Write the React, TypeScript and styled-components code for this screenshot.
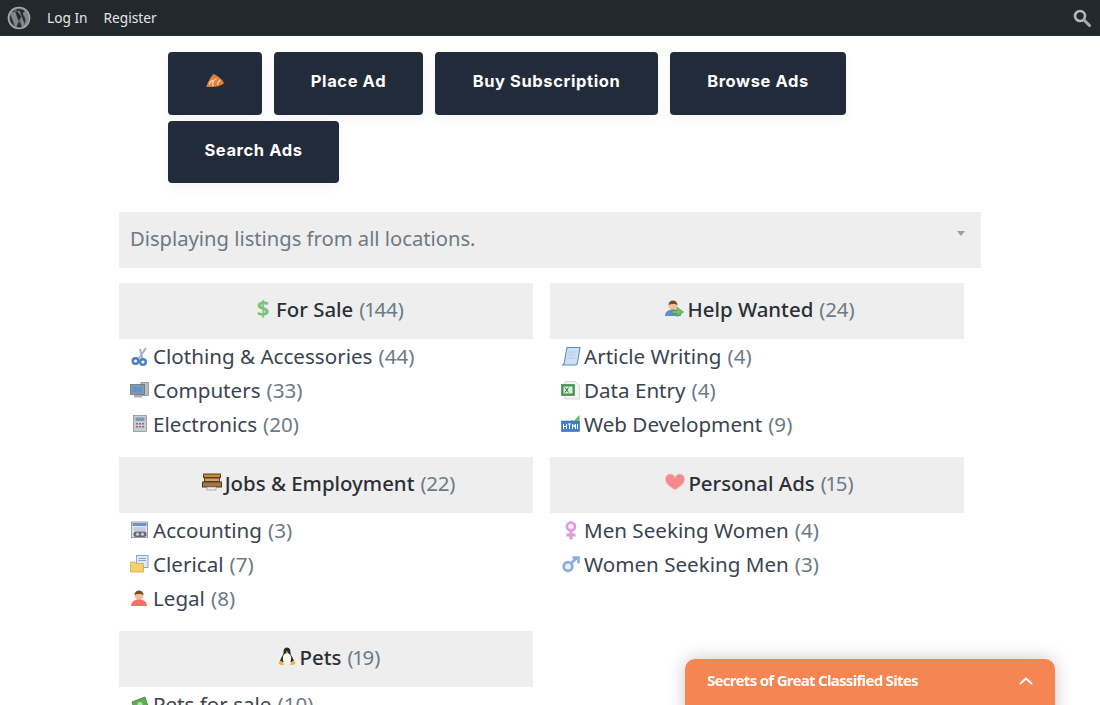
import React from "react";
import styled, { createGlobalStyle } from "styled-components";

const Global = createGlobalStyle`
  html, body { margin: 0; padding: 0; height: 705px; overflow: hidden; background: #fff; }
  body { font-family: "Noto Sans", "Open Sans", sans-serif; }
  * { box-sizing: border-box; }
`;

const AdminBar = styled.header`
  height: 36px;
  background: #23282d;
  display: flex;
  align-items: center;
  justify-content: space-between;
  padding: 0 9px 0 7px;
  border-bottom: 1px solid #2c3135;
`;
const AdminLeft = styled.nav`
  display: flex;
  align-items: center;
  gap: 16px;
`;
const AdminLink = styled.a`
  font-size: 13.7px;
  color: #e4e6e8;
`;
const Main = styled.main`
  padding: 16px 119px 0;
`;
const ButtonRows = styled.div`
  display: flex;
  flex-wrap: wrap;
  column-gap: 12px;
  row-gap: 6px;
  padding-left: 49px;
  width: 760px;
`;
const NavButton = styled.a<{ $w: number; $h: number; $lift: number }>`
  width: ${(p) => p.$w}px;
  height: ${(p) => p.$h}px;
  background: #222b39;
  border-radius: 4px;
  box-shadow: 0 4px 12px rgba(0, 0, 0, 0.05);
  color: #fff;
  font-family: Inter, "Liberation Sans", sans-serif;
  font-weight: 700;
  font-size: 16.5px;
  letter-spacing: 0.6px;
  display: flex;
  align-items: center;
  justify-content: center;
  padding-bottom: ${(p) => p.$lift}px;
`;
const LocationBar = styled.div`
  margin-top: 29px;
  width: 862px;
  height: 56px;
  background: #eee;
  display: flex;
  align-items: center;
  justify-content: space-between;
  padding: 0 16px 4px 11px;
  color: #6c7a85;
  font-size: 20.2px;
`;
const Caret = styled.span`
  width: 0;
  height: 0;
  border-left: 4.5px solid transparent;
  border-right: 4.5px solid transparent;
  border-top: 5px solid #97a0a8;
  margin-bottom: 10px;
`;
const Grid = styled.div`
  margin-top: 15px;
  display: grid;
  grid-template-columns: 414px 414px;
  column-gap: 17px;
  align-items: start;
`;
const Column = styled.div`
  display: flex;
  flex-direction: column;
`;
const Block = styled.section`
  margin-bottom: 16px;
`;
const Heading = styled.h2`
  margin: 0;
  height: 56px;
  background: #eee;
  display: flex;
  align-items: center;
  justify-content: center;
  gap: 3px;
  font-size: 20.4px;
  font-weight: 500;
  color: #2b2f36;
  padding: 0 0 5px 5px;
`;
const Count = styled.span`
  color: #6c7a85;
  font-weight: 400;
  margin-left: 3px;
  font-variant-numeric: proportional-nums;
`;
const List = styled.ul`
  list-style: none;
  margin: 0;
  padding: 0 0 0 11px;
`;
const Row = styled.li`
  height: 34px;
  display: flex;
  align-items: center;
  gap: 3px;
  font-size: 20.6px;
  color: #3a4450;
`;
const RowCount = styled.span`
  color: #6c7a85;
  margin-left: 3px;
`;
const IconBox = styled.svg`
  width: 20px;
  height: 20px;
  flex: none;
  margin-top: 1px;
`;
const Sticky = styled.aside`
  position: fixed;
  left: 685px;
  top: 659px;
  width: 370px;
  height: 60px;
  background: #f58653;
  border-radius: 10px 10px 0 0;
  box-shadow: 0 0 18px rgba(0, 0, 0, 0.22);
  display: flex;
  justify-content: space-between;
  padding: 10px 22px 0;
  color: #fff;
`;
const StickyTitle = styled.span`
  font-size: 15px;
  font-weight: 700;
  letter-spacing: -0.7px;
  line-height: 22px;
`;

const I = ({ children }: { children: React.ReactNode }) => <IconBox viewBox="0 0 20 20">{children}</IconBox>;

const Dollar = () => (
  <IconBox viewBox="0 0 20 20">
    <text x="10" y="17" textAnchor="middle" fontSize="22" fontWeight="700" fill="#7cc27a" fontFamily="Noto Sans">$</text>
  </IconBox>
);
const Person = ({ c, arrow }: { c: string; arrow?: boolean }) => (
  <I>
    <circle cx="9" cy="6.500" r="4.500" fill="#f0bf9c" />
    <path d="M4.500 6a4.500 4.500 0 0 1 9 0c-2-1.500-7-1.500-9 0z" fill="#7a4a2a" />
    <path d="M1 17c0-4 3-6.500 8-6.500s8 2.500 8 6.500z" fill={c} />
    {arrow && <path d="M8 11.500h5V8.500l6.500 4.500-6.500 4.500v-3H8z" fill="#76c066" stroke="#4c8f3f" strokeWidth=".7" />}
  </I>
);
const Scissors = () => (
  <I>
    <path d="M16 1 8.500 12M10 2l2.500 10" stroke="#a6b4c4" strokeWidth="2" fill="none" />
    <circle cx="5.500" cy="14" r="2.800" fill="none" stroke="#4a7fc0" strokeWidth="2.400" />
    <circle cx="13" cy="15" r="2.800" fill="none" stroke="#4a7fc0" strokeWidth="2.400" />
  </I>
);
const Computer = () => (
  <I>
    <rect x="11" y="1.500" width="7.500" height="13" fill="#b9bec4" stroke="#7c848c" strokeWidth=".7" />
    <rect x="0.500" y="3.500" width="14" height="10" fill="#8d99a6" stroke="#5e6973" strokeWidth=".7" />
    <rect x="2.500" y="5.500" width="10" height="6" fill="#5d95d3" />
    <rect x="4" y="14" width="8" height="2.500" fill="#a9afb5" />
  </I>
);
const Calc = () => (
  <I>
    <rect x="3.500" y="0.500" width="13" height="16" fill="#c7ccd2" stroke="#80868d" strokeWidth=".7" />
    <rect x="5.500" y="2.500" width="9" height="3.500" fill="#7f99bd" />
    <path d="M6 8h2v1.500H6zm3 0h2v1.500H9zm3 0h2v1.500h-2zM6 11h2v1.500H6zm3 0h2v1.500H9zm3 0h2v1.500h-2z" fill="#8a6f72" />
  </I>
);
const Scroll = () => (
  <I>
    <path d="M6 .5h13l-2.500 15c-.3 2-1 2.500-2 2.500H1c1.500 0 2-1 2.300-2.500z" fill="#cfe0f5" stroke="#5f8cc6" strokeWidth="1.100" />
    <path d="M7 5h8M6.500 8h8M6 11h8" stroke="#a8c4e4" strokeWidth=".8" />
  </I>
);
const Sheet = () => (
  <I>
    <path d="M4 .5h10l4.500 4.500v13H4z" fill="#f4f4f4" stroke="#cfcfcf" strokeWidth=".8" />
    <rect x="0.500" y="3.500" width="13" height="11" fill="#3f9a4f" stroke="#2a7038" strokeWidth=".5" />
    <path d="M2.500 5.500h9v7h-9z" fill="#d8efd9" />
    <path d="m4 6.500 3.500 5m0-5-3.500 5" stroke="#2a7038" strokeWidth="1" />
  </I>
);
const Html = () => (
  <I>
    <rect x="0.500" y="6" width="18" height="10.500" fill="#3f7fd0" stroke="#2a5f9e" strokeWidth=".5" />
    <path d="M2.500 9v5m3-5v5m-3-2.500h3M7 9h3M8.500 9v5M11.500 14V9l1.500 3 1.500-3v5M16.500 9v5" stroke="#fff" strokeWidth="1" fill="none" />
    <path d="m10 5 3 1 5.500-6v5.500l-3 .5h-5.500z" fill="#5dbb4f" />
  </I>
);
const Printer = () => (
  <I>
    <rect x="1.500" y="1" width="17" height="3.500" fill="#c68a3e" stroke="#5e3f1a" strokeWidth="1" />
    <rect x="2.500" y="5" width="15" height="3.500" fill="#d0a060" stroke="#5e3f1a" strokeWidth="1" />
    <rect x="0.500" y="9" width="19" height="5" fill="#a07a44" stroke="#4e371a" strokeWidth="1" />
    <rect x="5" y="14" width="9" height="3" fill="#eee" stroke="#888" strokeWidth=".6" />
  </I>
);
const Ledger = () => (
  <I>
    <rect x="1.500" y="1" width="16" height="15.500" fill="#dfe6ee" stroke="#7f8c99" strokeWidth=".8" />
    <rect x="2.500" y="2" width="14" height="3" fill="#6c93c4" />
    <path d="M3.500 7h12M3.500 9h12" stroke="#8fb0d4" strokeWidth=".8" />
    <rect x="3.500" y="10.500" width="13" height="5.500" rx="2.500" fill="#666" />
    <circle cx="7.500" cy="13.200" r="1.600" fill="#ccc" />
    <circle cx="12.500" cy="13.200" r="1.600" fill="#ccc" />
  </I>
);
const Folder = () => (
  <I>
    <rect x="6.500" y="0.500" width="11.500" height="12" fill="#dfeaf6" stroke="#6d96c6" strokeWidth=".8" />
    <path d="M8.500 3.500h7.500M8.500 5.500h7.500" stroke="#6d96c6" strokeWidth=".8" />
    <path d="M0.500 7h4.500l1 1.500h7.500V17H.5z" fill="#f5cf6e" stroke="#d4a848" strokeWidth=".8" />
  </I>
);
const Heart = () => (
  <I>
    <path d="M10 17C4 13 .5 10.500.5 6.500a4.500 4.500 0 0 1 9.500-1.500 4.500 4.500 0 0 1 9.500 1.500C19.500 10.500 16 13 10 17z" fill="#f58a8a" stroke="#f9c4c4" strokeWidth="1" />
  </I>
);
const Female = () => (
  <I>
    <circle cx="10" cy="5.500" r="4" fill="#fbeffb" stroke="#e096e0" strokeWidth="2.600" />
    <path d="M10 9.500V18.500M5.500 14h9" stroke="#e096e0" strokeWidth="3" />
  </I>
);
const Male = () => (
  <I>
    <circle cx="7" cy="11.500" r="4.300" fill="#eaf2fb" stroke="#88aedb" strokeWidth="2.800" />
    <path d="M10.500 8 15.500 3M11.500 2.500h6v6" stroke="#88aedb" strokeWidth="2.600" fill="none" />
  </I>
);
const Tux = () => (
  <I>
    <path d="M10 .5c3 0 3.500 3 3.500 5 0 3 3.500 6 3.500 9.500H3c0-3.500 3.500-6.500 3.500-9.500 0-2 .5-5 3.500-5z" fill="#2a2a2a" />
    <ellipse cx="10" cy="11.500" rx="4.200" ry="5.500" fill="#f8f8f2" />
    <path d="M1.500 16c1.500-3 4-2.500 5.500 1.500-2 1-4.500.8-5.500-1.500zm17 0c-1.500-3-4-2.500-5.500 1.500 2 1 4.500.8 5.500-1.500zM8.500 4.500h3L10 6.500z" fill="#eeb530" />
  </I>
);
const Money = () => (
  <I>
    <path d="M2 7 15 2l3 9-13 6z" fill="#5dad54" stroke="#3d7d36" strokeWidth=".8" />
    <circle cx="10" cy="9.500" r="2.500" fill="#b6e0ad" />
  </I>
);

const WpLogo = () => (
  <svg width="24" height="24" viewBox="0 0 24 24" fill="none">
    <circle cx="12" cy="12" r="10.700" stroke="#a7aaad" strokeWidth="1.300" fill="#82878c" />
    <path d="M5 6.300C6.800 4.100 9.300 2.800 12 2.800c2.400 0 4.600.9 6.300 2.400-1.300 0-2.200 1.100-2.200 2.300 0 1.100.6 2 1.300 3.100.5.900 1.100 2 1.100 3.700 0 1.100-.4 2.500-1 4.300L16.300 15l-4-10.400c.7 0 1.300-.1 1.300-.1M9.500 4.600s-1.200 0-1.900-.1L12 17l2.400-6.500M4.300 8l4.500 12.400M7.300 4.500H5.500M2.800 12c0 3.700 2.100 6.900 5.200 8.400L3.600 8.300A9.100 9.100 0 0 0 2.800 12zm9.400 1.100-2.800 8a9 9 0 0 0 5.600-.1z" fill="#23282d" stroke="#82878c" strokeWidth=".4" />
  </svg>
);
const Search = () => (
  <svg width="18" height="18" viewBox="0 0 18 18" fill="none">
    <circle cx="7" cy="7" r="5" stroke="#b4b9be" strokeWidth="2.600" />
    <path d="m11 11 5.500 5.500" stroke="#a7aaad" strokeWidth="3" strokeLinecap="round" />
  </svg>
);
const Rss = () => (
  <svg width="20" height="16" viewBox="0 0 20 16">
    <path d="M1.500 13C3 9 5 5 7.500 2c1-1 2-1 3 0 3 1.500 6 4 8 7 .5 1 0 2-1 2.500-2 .8-3 1.500-5 2-3 .5-6.500.5-10 .5-1 0-1.200-.5-1-1z" fill="#e2803c" />
    <path d="M4.500 12a4 4 0 0 1 3.500-4.500M8 13a6.500 6.500 0 0 1 3.500-7.500M12.500 12a7 7 0 0 1 2.500-5" stroke="#fbd3ae" strokeWidth="1.300" fill="none" />
  </svg>
);
const Chevron = () => (
  <svg width="14" height="22" viewBox="0 0 14 22" fill="none">
    <path d="m1.500 14.500 5.500-5 5.500 5" stroke="#fff" strokeWidth="2" strokeLinecap="round" strokeLinejoin="round" />
  </svg>
);

type Item = { icon: React.ReactNode; name: string; n: number };
type Cat = { icon: React.ReactNode; title: string; n: number; items: Item[] };

const left: Cat[] = [
  { icon: <Dollar />, title: "For Sale", n: 144, items: [
    { icon: <Scissors />, name: "Clothing & Accessories", n: 44 },
    { icon: <Computer />, name: "Computers", n: 33 },
    { icon: <Calc />, name: "Electronics", n: 20 },
  ] },
  { icon: <Printer />, title: "Jobs & Employment", n: 22, items: [
    { icon: <Ledger />, name: "Accounting", n: 3 },
    { icon: <Folder />, name: "Clerical", n: 7 },
    { icon: <Person c="#f0736a" />, name: "Legal", n: 8 },
  ] },
  { icon: <Tux />, title: "Pets", n: 19, items: [
    { icon: <Money />, name: "Pets for sale", n: 10 },
  ] },
];
const right: Cat[] = [
  { icon: <Person c="#5b8fd0" arrow />, title: "Help Wanted", n: 24, items: [
    { icon: <Scroll />, name: "Article Writing", n: 4 },
    { icon: <Sheet />, name: "Data Entry", n: 4 },
    { icon: <Html />, name: "Web Development", n: 9 },
  ] },
  { icon: <Heart />, title: "Personal Ads", n: 15, items: [
    { icon: <Female />, name: "Men Seeking Women", n: 4 },
    { icon: <Male />, name: "Women Seeking Men", n: 3 },
  ] },
];

const CategoryColumn = ({ cats }: { cats: Cat[] }) => (
  <Column>
    {cats.map((c) => (
      <Block key={c.title}>
        <Heading>
          {c.icon}
          <span>{c.title}</span>
          <Count>({c.n})</Count>
        </Heading>
        <List>
          {c.items.map((it) => (
            <Row key={it.name}>
              {it.icon}
              <span>{it.name}</span>
              <RowCount>({it.n})</RowCount>
            </Row>
          ))}
        </List>
      </Block>
    ))}
  </Column>
);

export default function App() {
  return (
    <>
      <Global />
      <AdminBar>
        <AdminLeft>
          <WpLogo />
          <AdminLink>Log In</AdminLink>
          <AdminLink>Register</AdminLink>
        </AdminLeft>
        <Search />
      </AdminBar>
      <Main>
        <ButtonRows>
          <NavButton $w={94} $h={63} $lift={6}><Rss /></NavButton>
          <NavButton $w={149} $h={63} $lift={6}>Place Ad</NavButton>
          <NavButton $w={223} $h={63} $lift={6}>Buy Subscription</NavButton>
          <NavButton $w={176} $h={63} $lift={6}>Browse Ads</NavButton>
          <NavButton $w={171} $h={62} $lift={4}>Search Ads</NavButton>
        </ButtonRows>
        <LocationBar>
          <span>Displaying listings from all locations.</span>
          <Caret />
        </LocationBar>
        <Grid>
          <CategoryColumn cats={left} />
          <CategoryColumn cats={right} />
        </Grid>
      </Main>
      <Sticky>
        <StickyTitle>Secrets of Great Classified Sites</StickyTitle>
        <Chevron />
      </Sticky>
    </>
  );
}
